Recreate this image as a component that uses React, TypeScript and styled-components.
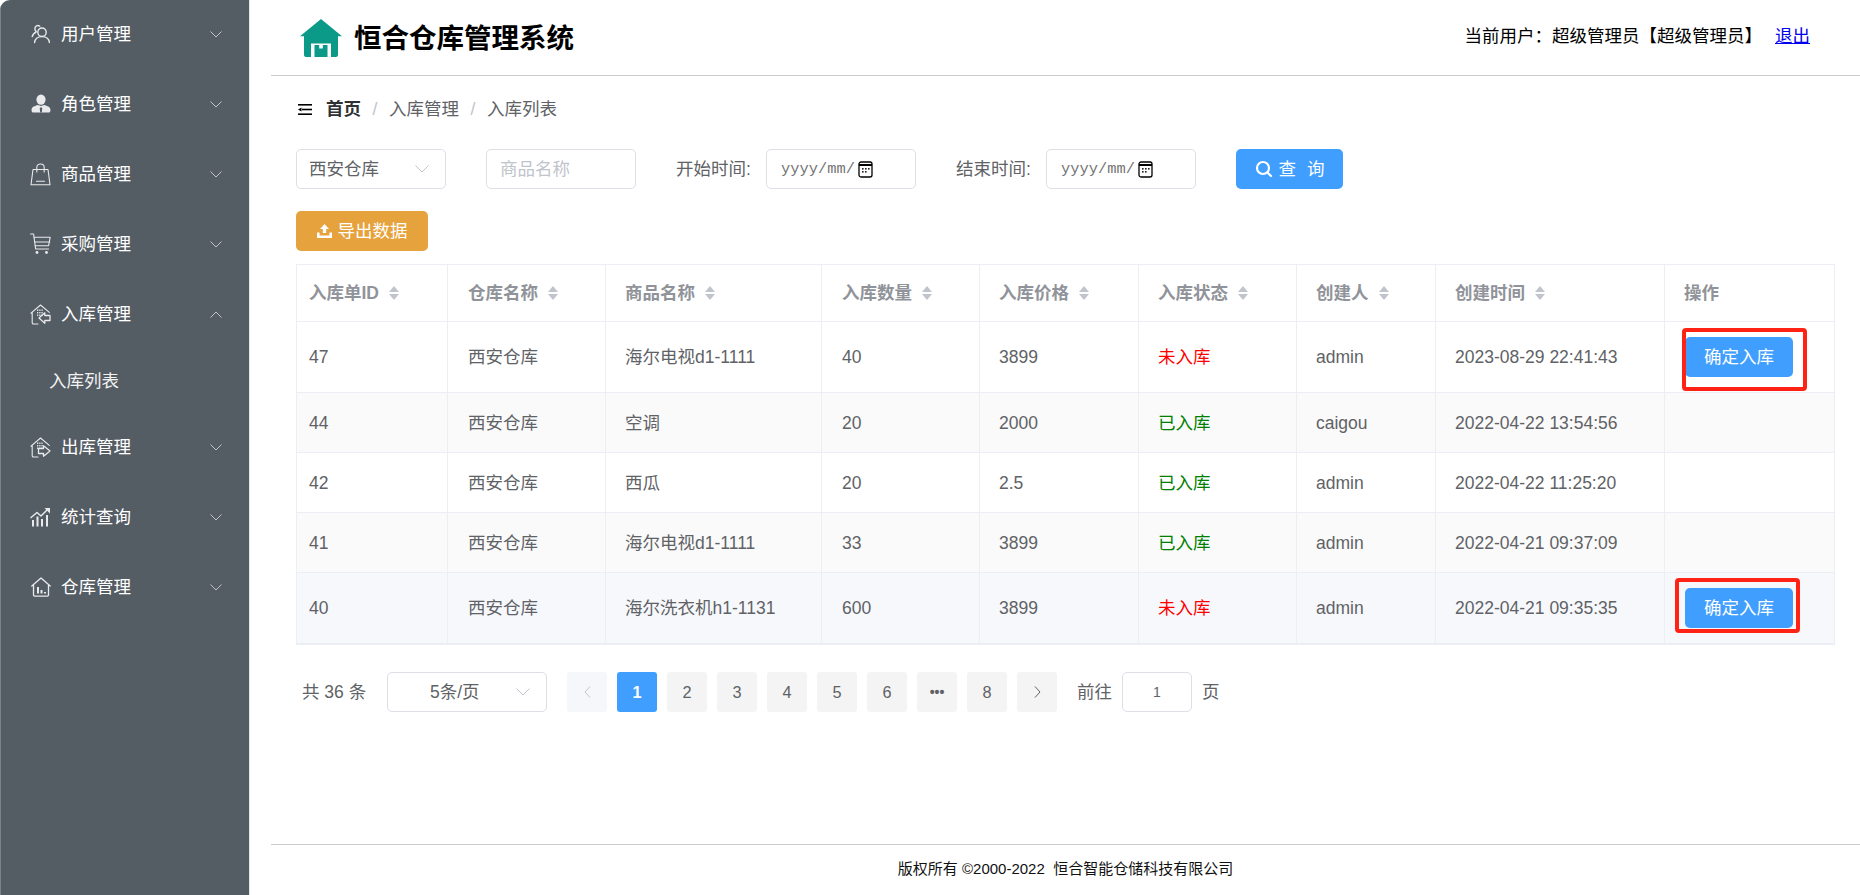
import React from "react";
import styled, { createGlobalStyle } from "styled-components";

const Global = createGlobalStyle`
  * { box-sizing: border-box; }
  html, body { margin: 0; padding: 0; height: 100%; background: #fff; }
  body { font-family: "Liberation Sans", "Noto Sans CJK SC", sans-serif; font-size: 17.5px; line-height: 24px; color: #606266; }
  #root { height: 100%; }
`;

const Page = styled.div`
  display: flex;
  height: 895px;
  overflow: hidden;
  border-radius: 10px 10px 0 0;
`;
const Sidebar = styled.nav`
  flex: 0 0 250px;
  background: #545c64;
  border-left: 1px solid #7b8288;
  border-right: 1px solid #e8e8e8;
  display: flex;
  flex-direction: column;
`;
const MenuItem = styled.div`
  height: 70px;
  padding: 0 27px 2px 29px;
  display: flex;
  align-items: center;
  color: #fff;
`;
const MenuIcon = styled.span`
  width: 21px;
  height: 22px;
  margin-right: 10px;
  display: flex;
  align-items: center;
  justify-content: center;
  color: #e9eaeb;
`;
const MenuLabel = styled.span`
  flex: 1;
`;
const SubItem = styled.div`
  height: 63px;
  padding: 0 0 2px 48px;
  display: flex;
  align-items: center;
  color: #f2f2f2;
`;
const Main = styled.main`
  flex: 1;
  margin-left: 21px;
  display: flex;
  flex-direction: column;
  min-width: 0;
`;
const Header = styled.header`
  height: 76px;
  flex: none;
  border-bottom: 1px solid #ccc;
  padding: 0 50px 0 29px;
  display: flex;
  align-items: center;
  justify-content: space-between;
`;
const Brand = styled.div`
  display: flex;
  align-items: center;
  gap: 12px;
`;
const Title = styled.h1`
  margin: 0;
  font-size: 27.5px;
  font-weight: 700;
  color: #000;
  line-height: 1;
  padding-top: 3px;
`;
const UserBox = styled.div`
  display: flex;
  gap: 13px;
  color: #000;
  margin-top: -3px;
`;
const Logout = styled.a`
  color: #0000ee;
  text-decoration: underline;
`;
const Content = styled.section`
  flex: 1;
  padding: 21px 25px 0;
`;
const Crumbs = styled.div`
  height: 24px;
  display: flex;
  align-items: center;
  padding-left: 2px;
  margin-bottom: 28px;
`;
const CrumbIcon = styled.span`
  display: flex;
  width: 14px;
  margin-right: 14px;
`;
const Crumb = styled.span<{ $strong?: boolean }>`
  font-weight: ${(p) => (p.$strong ? 700 : 400)};
  color: ${(p) => (p.$strong ? "#303133" : "#606266")};
`;
const CrumbSep = styled.span`
  width: 28px;
  text-align: center;
  color: #c0c4cc;
`;
const FilterRow = styled.div`
  display: flex;
  align-items: center;
  gap: 40px;
  margin-bottom: 22px;
`;
const SelectBox = styled.div<{ $w: number; $pad: number }>`
  width: ${(p) => p.$w}px;
  height: 40px;
  flex: none;
  border: 1px solid #dcdfe6;
  border-radius: 5px;
  padding: 0 16px 0 ${(p) => p.$pad}px;
  display: flex;
  align-items: center;
  justify-content: space-between;
  color: #606266;
  background: #fff;
`;
const TextInput = styled.input`
  width: 150px;
  height: 40px;
  border: 1px solid #dcdfe6;
  border-radius: 5px;
  padding: 0 13px;
  font: inherit;
  color: #606266;
  outline: none;
  &::placeholder { color: #c0c4cc; opacity: 1; }
`;
const Field = styled.div`
  display: flex;
  align-items: center;
`;
const FieldLabel = styled.span`
  width: 90px;
`;
const DateBox = styled.div`
  width: 150px;
  height: 40px;
  border: 1px solid #dcdfe6;
  border-radius: 5px;
  padding-left: 14px;
  display: flex;
  align-items: center;
  gap: 3px;
  font-family: "Liberation Mono", monospace;
  font-size: 15.4px;
  color: #757575;
`;
const Button = styled.button<{ $bg: string; $w: number }>`
  width: ${(p) => p.$w}px;
  height: 40px;
  flex: none;
  border: 0;
  border-radius: 5px;
  background: ${(p) => p.$bg};
  color: #fff;
  font: inherit;
  padding: 0;
  display: flex;
  align-items: center;
  justify-content: center;
  gap: 6px;
`;
const Spaced = styled.span`
  word-spacing: 6px;
`;
const TableWrap = styled.div`
  margin-top: 13px;
  width: 1539px;
  border-top: 1px solid #ebeef5;
  border-left: 1px solid #ebeef5;
  border-bottom: 1px solid #ebeef5;
`;
const Table = styled.table`
  width: 1538px;
  table-layout: fixed;
  border-collapse: separate;
  border-spacing: 0;
`;
const Th = styled.th<{ $pad: number }>`
  height: 57px;
  padding: 0 0 1px ${(p) => p.$pad}px;
  text-align: left;
  font-weight: 700;
  color: #909399;
  border-right: 1px solid #ebeef5;
  border-bottom: 1px solid #ebeef5;
  white-space: nowrap;
`;
const Row = styled.tr<{ $bg?: string; $h: number }>`
  background: ${(p) => p.$bg || "#fff"};
  height: ${(p) => p.$h}px;
`;
const Td = styled.td<{ $pad: number }>`
  position: relative;
  padding: 0 0 0 ${(p) => p.$pad}px;
  border-right: 1px solid #ebeef5;
  border-bottom: 1px solid #ebeef5;
  white-space: nowrap;
  color: #606266;
`;
const Status = styled.span<{ $ok: boolean }>`
  color: ${(p) => (p.$ok ? "#008000" : "#ff0000")};
`;
const Sort = styled.span`
  display: inline-flex;
  flex-direction: column;
  gap: 2px;
  margin-left: 10px;
  vertical-align: middle;
  margin-top: -2px;
  &::before, &::after {
    content: "";
    width: 0;
    height: 0;
    border-left: 5.5px solid transparent;
    border-right: 5.5px solid transparent;
  }
  &::before { border-bottom: 6.5px solid #c0c4cc; }
  &::after { border-top: 6.5px solid #c0c4cc; }
`;
const Callout = styled.span<{ $l: number; $t: number; $h: number }>`
  position: absolute;
  left: ${(p) => p.$l}px;
  top: ${(p) => p.$t}px;
  width: 125px;
  height: ${(p) => p.$h}px;
  border: 4px solid #ff2215;
  border-radius: 4px;
`;
const Pager = styled.div`
  margin-top: 27px;
  height: 40px;
  display: flex;
  align-items: center;
  padding-left: 6px;
`;
const Total = styled.span`
  width: 85px;
`;
const PagerSelect = styled(SelectBox)`
  margin-right: 20px;
`;
const PageBtn = styled.span<{ $active?: boolean; $off?: boolean }>`
  width: 40px;
  height: 40px;
  margin-right: 10px;
  border-radius: 3px;
  display: flex;
  align-items: center;
  justify-content: center;
  font-size: 16.25px;
  background: ${(p) => (p.$active ? "#409eff" : p.$off ? "#f6f7fb" : "#f4f4f5")};
  color: ${(p) => (p.$active ? "#fff" : p.$off ? "#c0c4cc" : "#606266")};
  font-weight: ${(p) => (p.$active ? 700 : 400)};
`;
const Dots = styled.span`
  font-size: 14px;
  font-weight: 700;
`;
const Jump = styled.span`
  margin-left: 10px;
  display: flex;
  align-items: center;
  gap: 10px;
  white-space: nowrap;
`;
const JumpInput = styled.input`
  width: 70px;
  height: 40px;
  border: 1px solid #dcdfe6;
  border-radius: 5px;
  text-align: center;
  font: inherit;
  font-size: 14px;
  color: #606266;
  outline: none;
`;
const Footer = styled.footer`
  height: 51px;
  flex: none;
  border-top: 1px solid #ccc;
  padding-bottom: 3px;
  display: flex;
  align-items: center;
  justify-content: center;
  font-size: 15px;
  color: #111;
  white-space: pre;
`;

const Chevron = ({ up, size = 12, color = "#c0c4cc" }: { up?: boolean; size?: number; color?: string }) => (
  <svg width={size} height={size / 2 + 1} viewBox={`0 0 ${size} ${size / 2 + 1}`} fill="none">
    <polyline
      points={up ? `0.5,${size / 2 + 0.5} ${size / 2},1 ${size - 0.5},${size / 2 + 0.5}` : `0.5,0.5 ${size / 2},${size / 2} ${size - 0.5},0.5`}
      stroke={color}
      strokeWidth="1"
    />
  </svg>
);
const SideArrow = ({ left, color }: { left?: boolean; color: string }) => (
  <svg width="7" height="12" viewBox="0 0 7 12" fill="none">
    <polyline points={left ? "6,0.500 1,6 6,11.500" : "1,0.500 6,6 1,11.500"} stroke={color} strokeWidth="1" />
  </svg>
);

const line = { fill: "none", stroke: "currentColor", strokeWidth: 1.1, strokeLinecap: "round" as const, strokeLinejoin: "round" as const };

const IconUsers = () => (
  <svg width="20" height="20" viewBox="0 0 20 20">
    <circle cx="11" cy="8.2" r="4.2" {...line} strokeWidth={1.4} />
    <path d="M3.6 18.5c.4-3.8 3.3-5.9 7.4-5.9s7 2.1 7.4 5.9" {...line} strokeWidth={1.4} />
    <path d="M8.8 2.2C6.6.6 3.8 2 3.9 4.8c0 1.4.6 2.3 1.4 3C3 9 1.6 10.6 1.2 12.6" {...line} strokeWidth={1.4} />
  </svg>
);
const IconRole = () => (
  <svg width="20" height="20" viewBox="0 0 20 20">
    <ellipse cx="10" cy="5.6" rx="4.6" ry="5.2" fill="currentColor" />
    <path d="M7 11c-3.300 1-6 1.800-6.400 4.300-.3 2 .3 3.200 1.300 3.200h16.200c1 0 1.600-1.200 1.300-3.200C19 12.800 16.300 12 13 11l-3 1z" fill="currentColor" />
    <path d="M9.200 13.400h1.600l.4 1.200-.4 3.900H9.200l-.4-3.900z" fill="#545c64" />
  </svg>
);
const IconBag = () => (
  <svg width="21" height="23" viewBox="0 0 21 23">
    <path d="M3 6.500h15l2 15.300H1z" {...line} />
    <path d="M6.800 9V4.500C6.800 2.400 8.400 1 10.500 1s3.700 1.400 3.700 3.500V9" {...line} />
    <path d="M6.500 18.300h8" {...line} />
  </svg>
);
const IconCart = () => (
  <svg width="21" height="22" viewBox="0 0 21 22">
    <path d="M.6 1h3l2 15h13" {...line} />
    <path d="M4 4.200h16.200l-1.600 8.500H5.200" {...line} />
    <path d="M4.800 9h15" {...line} />
    <circle cx="7" cy="19.500" r="1.400" fill="currentColor" />
    <circle cx="16.500" cy="19.500" r="1.400" fill="currentColor" />
  </svg>
);
const GridDots = ({ x = 7 }: { x?: number }) => (
  <g fill="currentColor">
    {[0, 1, 2].map((r) => [0, 1, 2].map((c) => (
      <rect key={`${r}${c}`} x={x + c * 2.2} y={5.500 + r * 2.500} width="1.300" height="1.400" />
    )))}
  </g>
);
const IconIn = () => (
  <svg width="21" height="21" viewBox="0 0 21 21">
    <path d="M8 20H3.500c-.8 0-1.300-.6-1.300-1.300V8.500L1 9.200 10.500 1l8.800 7.300" {...line} />
    <GridDots />
    <path d="M20 11.500h-5.200V8.800L9 14l5.800 5.200v-2.700H20z" {...line} strokeWidth={1.300} />
  </svg>
);
const IconOut = () => (
  <svg width="21" height="21" viewBox="0 0 21 21">
    <path d="M8 20H3.500c-.8 0-1.300-.6-1.300-1.300V8.500L1 9.200 10.500 1l8.800 7.300" {...line} />
    <GridDots />
    <path d="M8.500 11.500h5V8.800L20 14l-6.500 5.200v-2.700h-5z" {...line} strokeWidth={1.300} />
  </svg>
);
const IconStat = () => (
  <svg width="21" height="20" viewBox="0 0 21 20">
    <path d="M1 10.500 7 5.500l4 3.500 7-7" {...line} strokeWidth={1.500} />
    <path d="M14.500 1H20v5.500z" fill="currentColor" />
    <g fill="currentColor">
      <rect x="2" y="13" width="2" height="6.500" />
      <rect x="6.500" y="9.500" width="2" height="10" />
      <rect x="11" y="12" width="2" height="7.500" />
      <rect x="16" y="8" width="2" height="11.500" />
    </g>
  </svg>
);
const IconStore = () => (
  <svg width="20" height="20" viewBox="0 0 20 20">
    <path d="M2.500 7.500v10.600c0 .6.400 1 1 1h13c.6 0 1-.4 1-1V7.500M.8 9 10 1l9.200 8" {...line} strokeWidth={1.300} />
    <g fill="currentColor">
      <rect x="6" y="10" width="2" height="6.500" />
      <rect x="9.500" y="13" width="2" height="3.500" />
      <rect x="13" y="15" width="2" height="1.500" />
    </g>
  </svg>
);
const Logo = () => (
  <svg width="42" height="38" viewBox="0 0 42 38">
    <path d="M21 0 42 17.200H38V36c0 1.100-.9 2-2 2H6c-1.100 0-2-.9-2-2V17.200H0z" fill="#0b9a88" />
    <path d="M11 24.500h20V38H11z" fill="#fff" />
    <path d="M14.500 26h4.700v3.500h3.600V26h4.700v12h-13z" fill="#0b9a88" />
  </svg>
);
const FoldIcon = () => (
  <svg width="14" height="11" viewBox="0 0 14 11" fill="#000">
    <rect x="0" y="0" width="14" height="1.600" />
    <rect x="4" y="4.700" width="10" height="1.600" />
    <rect x="0" y="9.400" width="14" height="1.600" />
    <path d="M0 5.500 3.500 3.500v4z" />
  </svg>
);
const CalendarIcon = () => (
  <svg width="15" height="17" viewBox="0 0 15 17" fill="none">
    <rect x="1" y="1" width="13" height="15" rx="2" stroke="#000" strokeWidth="1.300" />
    <rect x="1" y="3" width="13" height="2" fill="#000" />
    <g fill="#222">
      <rect x="4" y="7" width="1.600" height="1.600" /><rect x="7" y="7" width="1.600" height="1.600" /><rect x="10" y="7" width="1.600" height="1.600" />
      <rect x="4" y="10" width="1.600" height="1.600" /><rect x="7" y="10" width="1.600" height="1.600" />
    </g>
  </svg>
);
const SearchIcon = () => (
  <svg width="18" height="18" viewBox="0 0 18 18" fill="none" stroke="#fff" strokeWidth="2.200" strokeLinecap="round">
    <circle cx="8" cy="8" r="6" />
    <path d="M12.500 12.500 16 16" />
  </svg>
);
const UploadIcon = () => (
  <svg width="15" height="14" viewBox="0 0 15 14" fill="#fff">
    <path d="M7.500 0 12 5H9.200v4H5.800V5H3z" />
    <path d="M0 8.500h2.600v3h9.800v-3H15V14H0z" />
  </svg>
);

const menus: [React.ReactNode, string, boolean?][] = [
  [<IconUsers />, "用户管理"],
  [<IconRole />, "角色管理"],
  [<IconBag />, "商品管理"],
  [<IconCart />, "采购管理"],
  [<IconIn />, "入库管理", true],
  [<IconOut />, "出库管理"],
  [<IconStat />, "统计查询"],
  [<IconStore />, "仓库管理"],
];

const columns: [string, number, boolean, number][] = [
  ["入库单ID", 151, true, 12],
  ["仓库名称", 158, true, 20],
  ["商品名称", 216, true, 19],
  ["入库数量", 158, true, 20],
  ["入库价格", 159, true, 19],
  ["入库状态", 158, true, 19],
  ["创建人", 139, true, 19],
  ["创建时间", 229, true, 19],
  ["操作", 170, false, 19],
];

type Rec = { id: string; name: string; qty: string; price: string; ok: boolean; by: string; at: string; h: number; bg?: string; callout?: { l: number; t: number; h: number } };
const rows: Rec[] = [
  { id: "47", name: "海尔电视d1-1111", qty: "40", price: "3899", ok: false, by: "admin", at: "2023-08-29 22:41:43", h: 71, callout: { l: 17, t: 6, h: 63 } },
  { id: "44", name: "空调", qty: "20", price: "2000", ok: true, by: "caigou", at: "2022-04-22 13:54:56", h: 60, bg: "#fafafa" },
  { id: "42", name: "西瓜", qty: "20", price: "2.5", ok: true, by: "admin", at: "2022-04-22 11:25:20", h: 60 },
  { id: "41", name: "海尔电视d1-1111", qty: "33", price: "3899", ok: true, by: "admin", at: "2022-04-21 09:37:09", h: 60, bg: "#fafafa" },
  { id: "40", name: "海尔洗衣机h1-1131", qty: "600", price: "3899", ok: false, by: "admin", at: "2022-04-21 09:35:35", h: 71, bg: "#f7f8fc", callout: { l: 10, t: 5, h: 55 } },
];

const pad = (i: number) => columns[i][3];

export default function App() {
  return (
    <Page>
      <Global />
      <Sidebar>
        {menus.map(([icon, label, open]) => (
          <React.Fragment key={label}>
            <MenuItem>
              <MenuIcon>{icon}</MenuIcon>
              <MenuLabel>{label}</MenuLabel>
              <Chevron up={open} />
            </MenuItem>
            {open && <SubItem>入库列表</SubItem>}
          </React.Fragment>
        ))}
      </Sidebar>
      <Main>
        <Header>
          <Brand>
            <Logo />
            <Title>恒合仓库管理系统</Title>
          </Brand>
          <UserBox>
            <span>当前用户：超级管理员【超级管理员】</span>
            <Logout href="#">退出</Logout>
          </UserBox>
        </Header>
        <Content>
          <Crumbs>
            <CrumbIcon><FoldIcon /></CrumbIcon>
            <Crumb $strong>首页</Crumb>
            <CrumbSep>/</CrumbSep>
            <Crumb>入库管理</Crumb>
            <CrumbSep>/</CrumbSep>
            <Crumb>入库列表</Crumb>
          </Crumbs>
          <FilterRow>
            <SelectBox $w={150} $pad={12}>
              西安仓库
              <Chevron size={14} />
            </SelectBox>
            <TextInput placeholder="商品名称" />
            <Field>
              <FieldLabel>开始时间:</FieldLabel>
              <DateBox>yyyy/mm/<CalendarIcon /></DateBox>
            </Field>
            <Field>
              <FieldLabel>结束时间:</FieldLabel>
              <DateBox>yyyy/mm/<CalendarIcon /></DateBox>
            </Field>
            <Button $bg="#409eff" $w={107}>
              <SearchIcon />
              <Spaced>查 询</Spaced>
            </Button>
          </FilterRow>
          <Button $bg="#e6a23c" $w={132}>
            <UploadIcon />
            导出数据
          </Button>
          <TableWrap>
            <Table>
              <colgroup>
                {columns.map(([title, w]) => (
                  <col key={title} width={w} />
                ))}
              </colgroup>
              <thead>
                <tr>
                  {columns.map(([title, , sortable, p]) => (
                    <Th key={title} $pad={p}>
                      {title}
                      {sortable && <Sort />}
                    </Th>
                  ))}
                </tr>
              </thead>
              <tbody>
                {rows.map((r) => (
                  <Row key={r.id} $h={r.h} $bg={r.bg}>
                    <Td $pad={pad(0)}>{r.id}</Td>
                    <Td $pad={pad(1)}>西安仓库</Td>
                    <Td $pad={pad(2)}>{r.name}</Td>
                    <Td $pad={pad(3)}>{r.qty}</Td>
                    <Td $pad={pad(4)}>{r.price}</Td>
                    <Td $pad={pad(5)}><Status $ok={r.ok}>{r.ok ? "已入库" : "未入库"}</Status></Td>
                    <Td $pad={pad(6)}>{r.by}</Td>
                    <Td $pad={pad(7)}>{r.at}</Td>
                    <Td $pad={20}>
                      {!r.ok && <Button $bg="#409eff" $w={108}>确定入库</Button>}
                      {r.callout && <Callout $l={r.callout.l} $t={r.callout.t} $h={r.callout.h} />}
                    </Td>
                  </Row>
                ))}
              </tbody>
            </Table>
          </TableWrap>
          <Pager>
            <Total>共 36 条</Total>
            <PagerSelect $w={160} $pad={42}>
              5条/页
              <Chevron size={14} />
            </PagerSelect>
            <PageBtn $off><SideArrow left color="#c0c4cc" /></PageBtn>
            <PageBtn $active>1</PageBtn>
            <PageBtn>2</PageBtn>
            <PageBtn>3</PageBtn>
            <PageBtn>4</PageBtn>
            <PageBtn>5</PageBtn>
            <PageBtn>6</PageBtn>
            <PageBtn><Dots>•••</Dots></PageBtn>
            <PageBtn>8</PageBtn>
            <PageBtn><SideArrow color="#606266" /></PageBtn>
            <Jump>
              前往
              <JumpInput defaultValue="1" />
              页
            </Jump>
          </Pager>
        </Content>
        <Footer>版权所有 ©2000-2022  恒合智能仓储科技有限公司</Footer>
      </Main>
    </Page>
  );
}
